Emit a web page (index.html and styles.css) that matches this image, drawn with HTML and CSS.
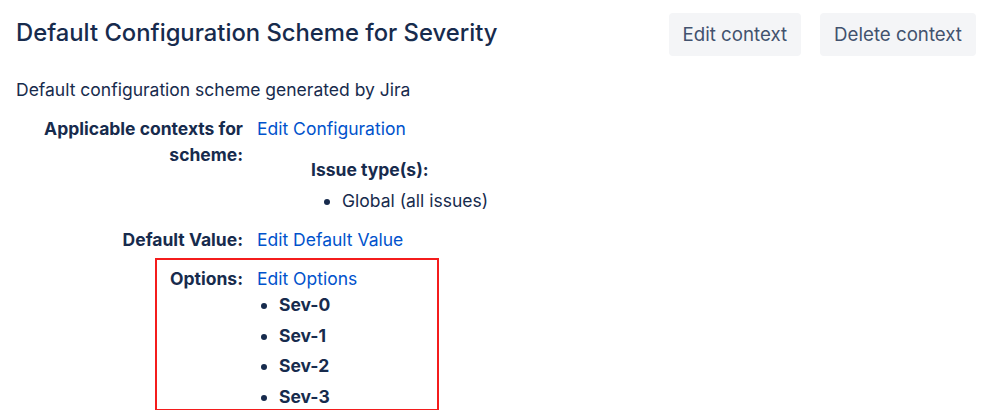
FILE: index.html
```html
<!DOCTYPE html>
<html lang="en">
<head>
<meta charset="utf-8">
<title>Default Configuration Scheme for Severity</title>
<link rel="stylesheet" href="styles.css">
</head>
<body>
<div class="page">
  <header class="header">
    <h1 class="title">Default Configuration Scheme for Severity</h1>
    <div class="actions">
      <button class="btn">Edit context</button>
      <button class="btn">Delete context</button>
    </div>
  </header>
  <p class="desc">Default configuration scheme generated by Jira</p>
  <div class="fields">
    <div class="row">
      <div class="label">Applicable contexts for scheme:</div>
      <div class="value">
        <a class="link" href="#">Edit Configuration</a>
        <div class="issue-block">
          <div class="issue-head">Issue type(s):</div>
          <ul class="issue-list"><li>Global (all issues)</li></ul>
        </div>
      </div>
    </div>
    <div class="row row-gap">
      <div class="label">Default Value:</div>
      <div class="value"><a class="link" href="#">Edit Default Value</a></div>
    </div>
    <div class="row row-gap row-options">
      <div class="highlight"></div>
      <div class="label">Options:</div>
      <div class="value">
        <a class="link" href="#">Edit Options</a>
        <ul class="opt-list">
          <li>Sev-0</li>
          <li>Sev-1</li>
          <li>Sev-2</li>
          <li>Sev-3</li>
        </ul>
      </div>
    </div>
  </div>
</div>
</body>
</html>
```

FILE: styles.css
```css
html, body {
  margin: 0;
  padding: 0;
  background: #ffffff;
}
body {
  font-family: Inter, "Noto Sans", "Liberation Sans", sans-serif;
  color: #172b4d;
  font-size: 17.5px;
  line-height: 26px;
}
.page {
  padding: 13px 23px 0 16px;
}
.header {
  display: flex;
  justify-content: space-between;
  align-items: center;
}
.title {
  margin: -3px 0 0;
  font-size: 23.8px;
  line-height: 28px;
  font-weight: 500;
  color: #172b4d;
}
.actions {
  display: flex;
  gap: 19px;
}
.btn {
  height: 43px;
  padding: 0 14px;
  border: none;
  border-radius: 4px;
  background: #f4f5f7;
  color: #42526e;
  font-family: inherit;
  font-size: 18.7px;
}
.desc {
  margin: 21px 0 0;
}
.fields {
  margin-top: 13px;
}
.row {
  display: flex;
  gap: 14px;
  position: relative;
}
.row-gap {
  margin-top: 13px;
}
.label {
  width: 227px;
  flex: none;
  text-align: right;
  font-weight: 700;
}
.link {
  color: #0052cc;
  text-decoration: none;
}
.issue-block {
  margin: 15px 0 0 54px;
}
.issue-head {
  font-weight: 700;
}
.issue-list {
  margin: 5px 0 0;
  padding-left: 31px;
}
.opt-list {
  margin: 0;
  padding-left: 22px;
  font-weight: 700;
}
.opt-list li + li {
  margin-top: 4.6px;
}
.highlight {
  position: absolute;
  left: 139px;
  top: -8px;
  width: 284px;
  height: 153px;
  box-sizing: border-box;
  border: 2px solid #f41c1c;
  pointer-events: none;
}
```
